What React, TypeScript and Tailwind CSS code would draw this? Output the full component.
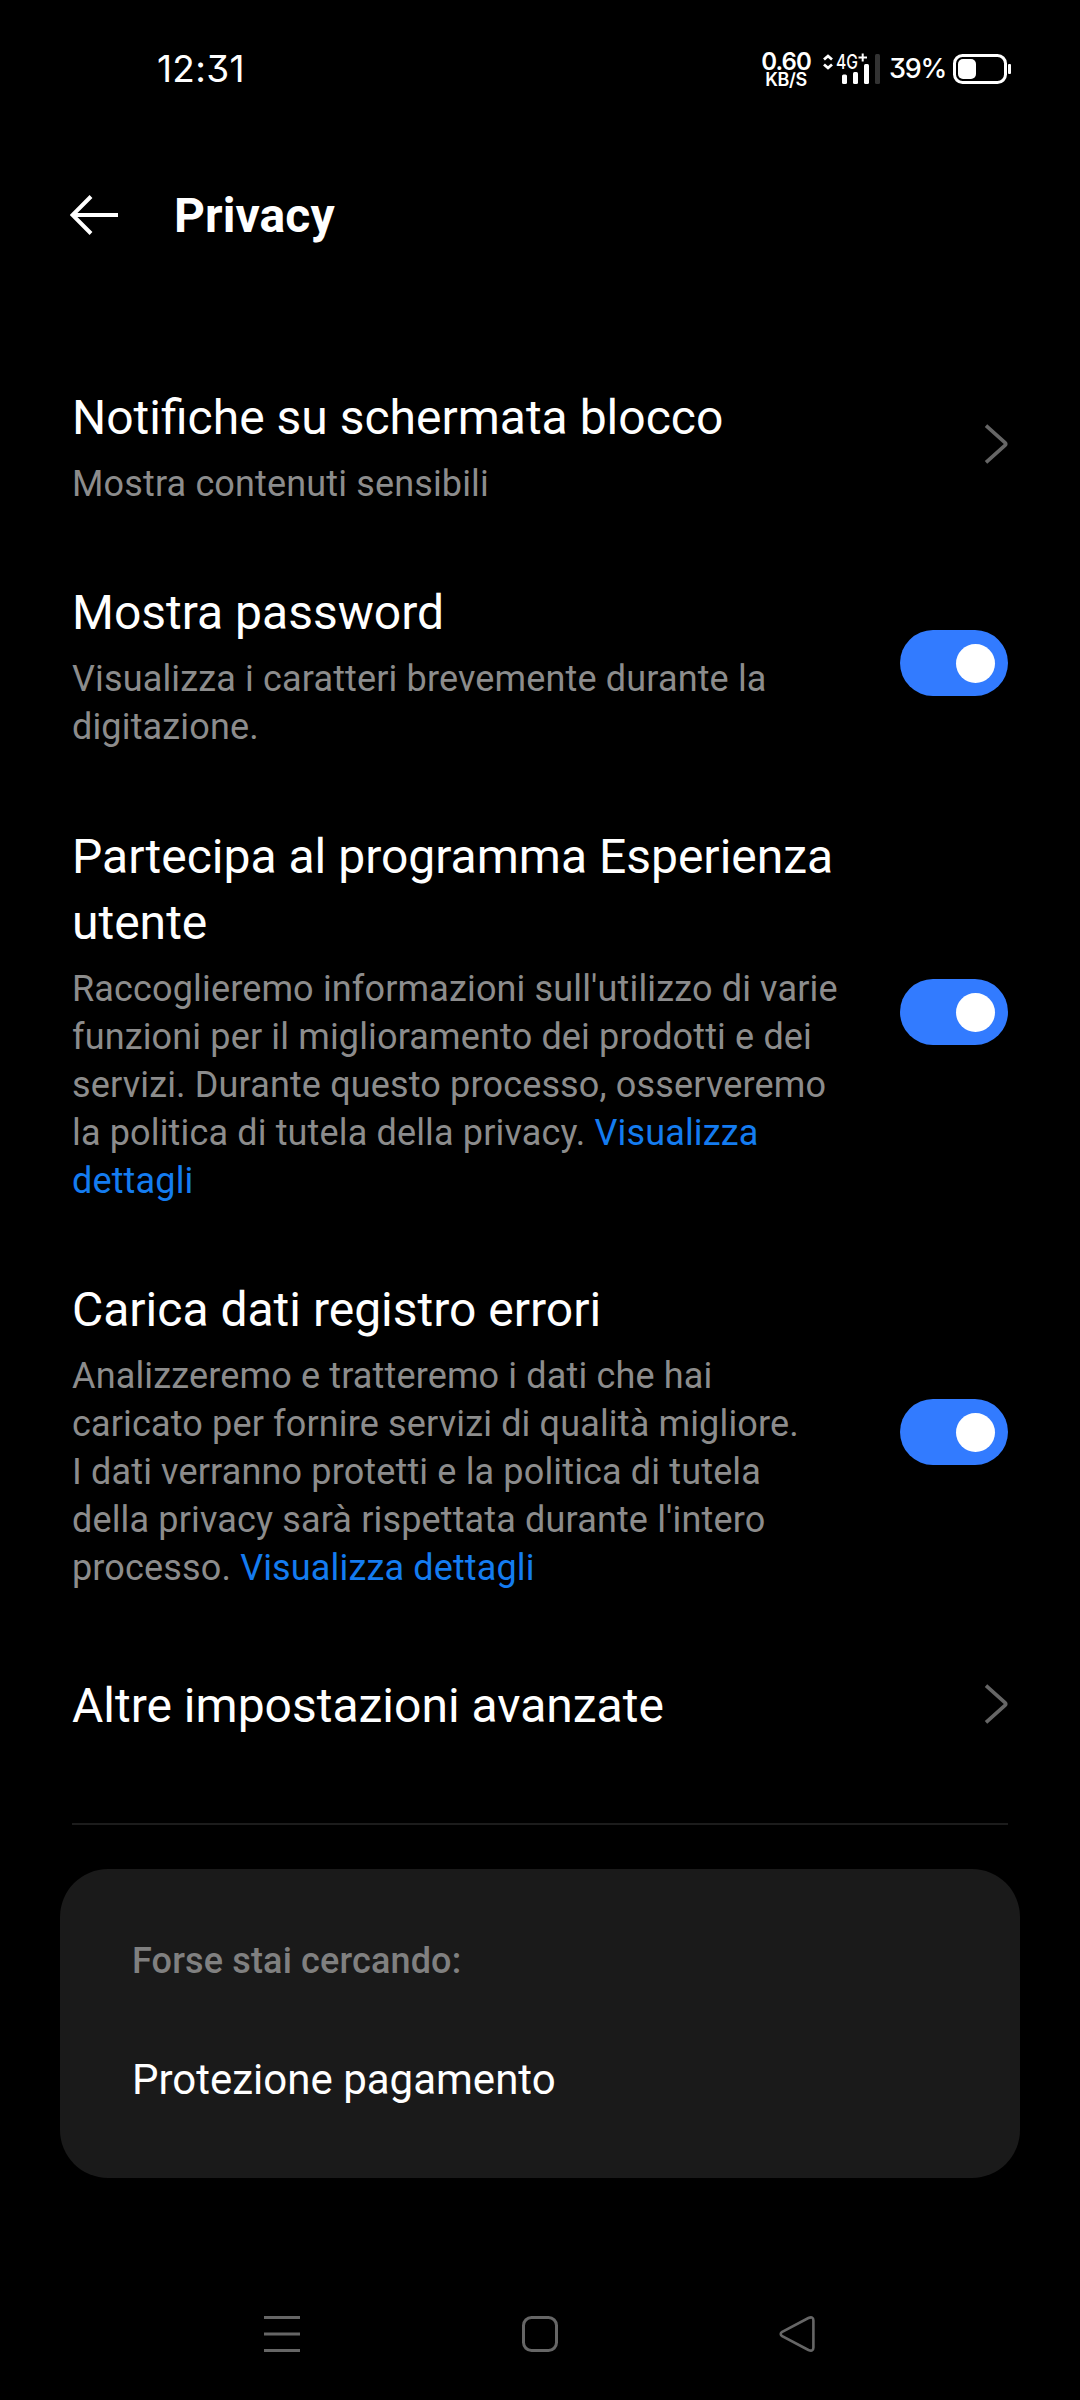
import React from 'react';

const Toggle: React.FC = () => (
  <div className="flex h-[66px] w-[108px] shrink-0 items-center justify-end rounded-full bg-[#327bff] pr-[13px]">
    <div className="h-[39px] w-[39px] rounded-full bg-white"></div>
  </div>
);

const Chevron: React.FC = () => (
  <svg className="h-10 w-6 shrink-0" viewBox="0 0 24 40" fill="none" stroke="#666666" strokeWidth="3.6">
    <path d="M2 1.6L21 18.6Q22.6 20 21 21.4L2 38.4" />
  </svg>
);

interface SettingRowProps {
  title: string;
  children?: React.ReactNode;
  control: React.ReactNode;
  className?: string;
}

const SettingRow: React.FC<SettingRowProps> = ({ title, children, control, className }) => (
  <div className={`flex items-center justify-between ${className ?? ''}`}>
    <div className="w-[774px]">
      <h2 className="text-[48px] leading-[66px] text-white">{title}</h2>
      {children && (
        <p className="mt-[9px] text-[36px] leading-[48px] tracking-[0.15px] text-[#8c8c8c]">{children}</p>
      )}
    </div>
    <div className="pb-[5px]">{control}</div>
  </div>
);

const StatusBar: React.FC = () => (
  <div className="flex h-[138px] items-center justify-between pr-[68px] pl-[157px] font-[Inter,sans-serif] text-white">
    <span className="text-[37px] tracking-[0.3px] [font-feature-settings:'cv09']">12:31</span>
    <div className="flex items-center">
      <div className="flex w-[52px] flex-col items-center pt-[2px] font-semibold">
        <span className="text-[24px] leading-[20px] tracking-[-0.9px]">0.60</span>
        <span className="text-[18px] leading-[16px] tracking-[-0.4px]">KB/S</span>
      </div>
      {/* Mobile network signal */}
      <svg className="ml-[10px] h-[32px] w-[58px] overflow-visible" viewBox="0 0 58 32" fill="none">
        <path d="M2 6.5L6 3L10 6.5M2 11.5L6 15L10 11.5" stroke="white" strokeWidth="2.8" />
        <text x="14" y="16" fill="white" fontSize="20" fontWeight="500" textLength="22" lengthAdjust="spacingAndGlyphs">
          4G
        </text>
        <path d="M36.5 4.5H45M40.7 0.5V8.5" stroke="white" strokeWidth="2" />
        <rect x="20" y="21.5" width="5" height="9.5" rx="1.5" fill="white" />
        <rect x="31" y="19" width="5" height="12" rx="1.5" fill="white" />
        <rect x="42" y="11" width="5" height="20" rx="1.5" fill="white" />
        <rect x="53" y="1" width="5" height="30" rx="1.5" fill="#333333" />
      </svg>
      <span className="ml-[9px] w-[55px] text-[27px] font-medium tracking-[-1.2px] [font-feature-settings:'cv09']">
        39%
      </span>
      <svg className="ml-[8px] h-[32px] w-[60px]" viewBox="0 0 60 32" fill="none">
        <rect x="2.5" y="2.5" width="51" height="27" rx="8" stroke="white" strokeWidth="3" />
        <rect x="6" y="6" width="18" height="20" rx="5" fill="white" />
        <rect x="56" y="11" width="3" height="10" rx="1" fill="white" />
      </svg>
    </div>
  </div>
);

const NavBar: React.FC = () => (
  <div className="mt-[136px] flex justify-between px-[262px]">
    <svg className="h-10 w-10" viewBox="0 0 40 40" fill="none" stroke="#666666" strokeWidth="3">
      <path d="M2 3.5H38M2 20H38M2 36.5H38" />
    </svg>
    <svg className="h-10 w-10" viewBox="0 0 40 40" fill="none" stroke="#666666" strokeWidth="3">
      <rect x="3.5" y="3.5" width="33" height="33" rx="8" />
    </svg>
    <svg className="h-10 w-10" viewBox="0 0 40 40" fill="none" stroke="#666666" strokeWidth="2.6">
      <path d="M4.2 17.8L30.4 4Q35.4 2 35.4 6.4V33.6Q35.4 38 30.4 36L4.2 22.2Q1.2 20 4.2 17.8Z" />
    </svg>
  </div>
);

const App: React.FC = () => {
  return (
    <div className="h-[2400px] w-[1080px] overflow-hidden bg-black font-[Roboto,sans-serif]">
      <StatusBar />
      <header className="flex h-[154px] items-center pl-[70px]">
        <svg className="h-10 w-12" viewBox="0 0 48 40" fill="none" stroke="white" strokeWidth="4">
          <path d="M48 20H3M21 1.5L2.5 20L21 38.5" />
        </svg>
        <h1 className="ml-[56px] pt-[2px] text-[48px] leading-[66px] font-bold tracking-[0.1px] text-white">Privacy</h1>
      </header>

      <main className="px-[72px] pt-[93px]">
        <SettingRow title="Notifiche su schermata blocco" control={<Chevron />}>
          Mostra contenuti sensibili
        </SettingRow>
        <SettingRow className="mt-[72px]" title="Mostra password" control={<Toggle />}>
          Visualizza i caratteri brevemente durante la
          <br />
          digitazione.
        </SettingRow>
        <SettingRow className="mt-[73px]" title="Partecipa al programma Esperienza utente" control={<Toggle />}>
          Raccoglieremo informazioni sull'utilizzo di varie
          <br />
          funzioni per il miglioramento dei prodotti e dei
          <br />
          servizi. Durante questo processo, osserveremo
          <br />
          la politica di tutela della privacy. <span className="text-[#147cf0]">Visualizza</span>
          <br />
          <span className="text-[#147cf0]">dettagli</span>
        </SettingRow>
        <SettingRow className="mt-[72px]" title="Carica dati registro errori" control={<Toggle />}>
          Analizzeremo e tratteremo i dati che hai
          <br />
          caricato per fornire servizi di qualità migliore.
          <br />
          I dati verranno protetti e la politica di tutela
          <br />
          della privacy sarà rispettata durante l'intero
          <br />
          processo. <span className="text-[#147cf0]">Visualizza dettagli</span>
        </SettingRow>
        <SettingRow className="mt-[81px]" title="Altre impostazioni avanzate" control={<Chevron />} />
      </main>

      <div className="mx-[72px] mt-[84px] h-[2px] bg-[#1c1c1c]"></div>

      {/* Suggestions */}
      <section className="mx-[60px] mt-[44px] h-[309px] rounded-[48px] bg-[#1a1a1a] px-[72px] pt-[68px]">
        <p className="text-[36px] leading-[48px] font-medium tracking-[0.15px] text-[#808080]">Forse stai cercando:</p>
        <p className="mt-[65px] text-[42px] leading-[60px] text-white">Protezione pagamento</p>
      </section>

      <NavBar />
    </div>
  );
};

export default App;
